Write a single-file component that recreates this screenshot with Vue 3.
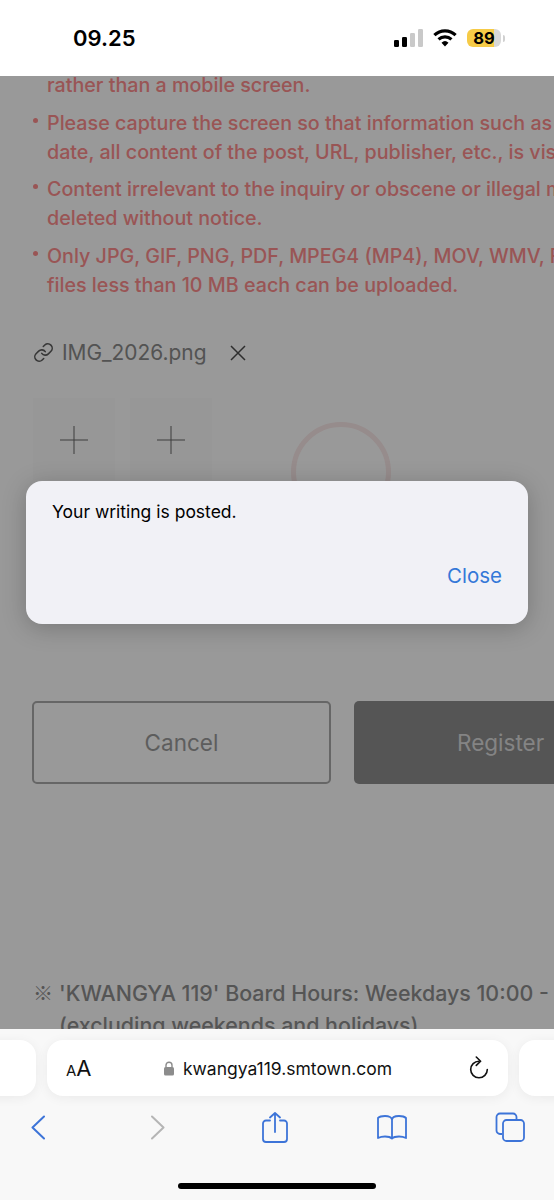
<template>
  <div class="phone">
    <header class="status">
      <span class="time">09.25</span>
      <div class="status-icons">
        <svg width="29" height="18" viewBox="0 0 29 18">
          <rect x="0" y="11" width="5" height="7" rx="1.3" fill="#000" />
          <rect x="8" y="8" width="5" height="10" rx="1.3" fill="#000" />
          <rect x="16" y="4" width="5" height="14" rx="1.3" fill="#c9c9c9" />
          <rect x="24" y="0" width="5" height="18" rx="1.3" fill="#c9c9c9" />
        </svg>
        <svg class="wifi" width="24" height="18" viewBox="0 0 26 19">
          <path d="M1.5 6.5a16.5 16.5 0 0 1 23 0" fill="none" stroke="#000" stroke-width="3.4" />
          <path d="M6 11a10.2 10.2 0 0 1 14 0" fill="none" stroke="#000" stroke-width="3.4" />
          <path d="M9.2 14.6 13 18.6l3.8-4a5.6 5.6 0 0 0-7.6 0z" fill="#000" />
        </svg>
        <div class="battery">
          <span class="level">89</span>
          <span class="cap"></span>
        </div>
      </div>
    </header>

    <main class="page">
      <ul class="notes">
        <li v-for="note in notes" :key="note.first" :class="{ cont: note.cont }">
          <p>{{ note.first }}</p>
          <p v-if="note.second">{{ note.second }}</p>
        </li>
      </ul>

      <div class="file">
        <svg width="21" height="21" viewBox="0 0 24 24" fill="none" stroke="#5c5c5c" stroke-width="1.8" stroke-linecap="round">
          <path d="M10 13a5 5 0 0 0 7.54.54l3-3a5 5 0 0 0-7.07-7.07l-1.72 1.71" />
          <path d="M14 11a5 5 0 0 0-7.54-.54l-3 3a5 5 0 0 0 7.07 7.07l1.71-1.71" />
        </svg>
        <span class="file-name">IMG_2026.png</span>
        <svg class="remove" width="18" height="18" viewBox="0 0 18 18" stroke="#4d4d4d" stroke-width="1.5">
          <path d="M2 2l14 14M16 2 2 16" />
        </svg>
      </div>

      <div class="uploads">
        <div v-for="n in 2" :key="n" class="upload">
          <svg width="28" height="28" viewBox="0 0 28 28" stroke="#666" stroke-width="1">
            <path d="M14 0v28M0 14h28" />
          </svg>
        </div>
      </div>

      <div class="actions">
        <button class="cancel">Cancel</button>
        <button class="register">Register</button>
      </div>

      <div class="hours">
        <p><span class="mark">※</span>'KWANGYA 119' Board Hours: Weekdays 10:00 - 17:00</p>
        <p class="sub">(excluding weekends and holidays)</p>
      </div>

      <div class="spinner"></div>
      <div class="dim"></div>

      <div class="dialog">
        <p>Your writing is posted.</p>
        <span class="close">Close</span>
      </div>
    </main>

    <footer class="bar">
      <div class="tabs">
        <div class="tab side"></div>
        <div class="tab url">
          <span class="aa"><small>A</small>A</span>
          <div class="address">
            <svg width="12" height="15" viewBox="0 0 12 15">
              <path d="M3 6.5V4.2a3 3 0 0 1 6 0v2.3" fill="none" stroke="#8c8c8c" stroke-width="1.4" />
              <rect x="1" y="6" width="10" height="8.5" rx="1.6" fill="#8c8c8c" />
            </svg>
            <span>kwangya119.smtown.com</span>
          </div>
          <svg width="22" height="24" viewBox="0 0 22 24" fill="none" stroke="#111" stroke-width="1.6" stroke-linecap="round" stroke-linejoin="round">
            <path d="M11 5.200A8.300 8.300 0 1 0 19.300 13.500" />
            <path d="M8.300 1 12.600 5.200 8.300 9.400" />
          </svg>
        </div>
        <div class="tab side"></div>
      </div>
      <nav class="tools">
        <span class="tool">
          <svg width="14" height="25" viewBox="0 0 14 25" fill="none" stroke="#3d74d8" stroke-width="2" stroke-linecap="round" stroke-linejoin="round">
            <path d="M13 1.500 1.500 12.500 13 23.500" />
          </svg>
        </span>
        <span class="tool forward">
          <svg width="14" height="25" viewBox="0 0 14 25" fill="none" stroke="#b5b5b5" stroke-width="2" stroke-linecap="round" stroke-linejoin="round">
            <path d="M1 1.500 12.500 12.500 1 23.500" />
          </svg>
        </span>
        <span class="tool share">
          <svg width="26" height="31" viewBox="0 0 26 31" fill="none" stroke="#3d74d8" stroke-width="1.8" stroke-linecap="round" stroke-linejoin="round">
            <path d="M8 8.500H4a3 3 0 0 0-3 3V27a3 3 0 0 0 3 3h18a3 3 0 0 0 3-3V11.500a3 3 0 0 0-3-3h-4" />
            <path d="M13 20V1M8 5.500 13 1l5 4.500" />
          </svg>
        </span>
        <span class="tool">
          <svg width="30" height="25" viewBox="0 0 30 25" fill="none" stroke="#3d74d8" stroke-width="1.8" stroke-linejoin="round">
            <path d="M15 5C15 2.500 12 1 8 1 5 1 2.500 1.500 1 3v20c2-1 4.500-1.500 7-1.500 3 0 5.500.5 7 2 1.500-1.500 4-2 7-2 2.500 0 5 .5 7 1.500V3c-1.500-1.500-4-2-7-2-4 0-7 1.500-7 4zM15 5v18.500" />
          </svg>
        </span>
        <span class="tool">
          <svg width="30" height="30" viewBox="0 0 30 30" fill="none" stroke="#3d74d8" stroke-width="1.8">
            <path d="M7 22H5a3.500 3.500 0 0 1-3.500-3.500V5A3.500 3.500 0 0 1 5 1.500h13A3.500 3.500 0 0 1 21.500 5v2" />
            <rect x="8" y="8" width="21" height="21" rx="3.500" />
          </svg>
        </span>
      </nav>
      <div class="home"></div>
    </footer>
  </div>
</template>

<script setup>
const notes = [
  { first: 'rather than a mobile screen.', cont: true },
  {
    first: 'Please capture the screen so that information such as the',
    second: 'date, all content of the post, URL, publisher, etc., is visible.'
  },
  {
    first: 'Content irrelevant to the inquiry or obscene or illegal material may be',
    second: 'deleted without notice.'
  },
  {
    first: 'Only JPG, GIF, PNG, PDF, MPEG4 (MP4), MOV, WMV, FLV, and',
    second: 'files less than 10 MB each can be uploaded.'
  }
]
</script>

<style>
html,
body {
  background: #fff;
}
</style>

<style scoped>
.phone {
  width: 554px;
  height: 1200px;
  display: flex;
  flex-direction: column;
  overflow: hidden;
  font-family: Inter, sans-serif;
}

.status {
  height: 76px;
  flex: none;
  background: #fff;
  display: flex;
  justify-content: space-between;
  align-items: center;
  padding: 0 49px 0 73px;
  position: relative;
  z-index: 3;
}

.time {
  font-size: 22px;
  font-weight: 600;
  color: #000;
}

.status-icons {
  display: flex;
  align-items: center;
}

.wifi {
  margin-left: 10px;
}

.battery {
  margin-left: 10px;
  display: flex;
  align-items: center;
}

.level {
  width: 34px;
  height: 18px;
  border-radius: 6px;
  background: linear-gradient(90deg, #f6cb47 80%, #d8d8d8 80%);
  font-size: 16.5px;
  font-weight: 700;
  line-height: 18px;
  text-align: center;
  color: #000;
}

.cap {
  width: 2px;
  height: 7px;
  margin-left: 2px;
  border-radius: 0 2px 2px 0;
  background: #d0d0d0;
}

.page {
  flex: 1;
  min-height: 0;
  position: relative;
  overflow: hidden;
  background: #fff;
  white-space: nowrap;
}

.notes {
  list-style: none;
  margin: -5px 0 0;
  padding: 0 0 0 47px;
  display: flex;
  flex-direction: column;
  gap: 8.5px;
  font-size: 19.7px;
  font-weight: 500;
  line-height: 29px;
  color: #ff8e8e;
}

.notes p {
  margin: 0;
}

.notes li {
  position: relative;
}

.notes li:not(.cont)::before {
  content: "";
  position: absolute;
  left: -14px;
  top: 9px;
  width: 5px;
  height: 5px;
  border-radius: 50%;
  background: #ff8e8e;
}

.file {
  margin: 38px 0 0 33px;
  height: 30px;
  display: flex;
  align-items: center;
}

.file-name {
  margin-left: 8px;
  font-size: 20.9px;
  color: #8a8a8a;
}

.remove {
  margin-left: 23px;
}

.uploads {
  margin: 30px 0 0 33px;
  display: flex;
  gap: 15px;
}

.upload {
  width: 82px;
  height: 82px;
  background: #fcfcfc;
  display: flex;
  justify-content: center;
  padding-top: 28px;
  box-sizing: border-box;
}

.spinner {
  position: absolute;
  left: 291px;
  top: 346px;
  width: 100px;
  height: 100px;
  box-sizing: border-box;
  border-radius: 50%;
  border: 5px solid #fbe9e9;
}

.actions {
  margin: 221px 0 0 32px;
  display: flex;
  gap: 23px;
}

.actions button {
  flex: none;
  width: 299px;
  height: 83px;
  border-radius: 5px;
  font-family: inherit;
  font-size: 22.5px;
  box-sizing: border-box;
}

.cancel {
  background: #fff;
  border: 2px solid #aaa;
  color: #9c9c9c;
}

.register {
  background: #8e8e8e;
  border: none;
  color: #dcdcdc;
  text-align: left;
  padding-left: 103px;
}

.hours {
  margin: 193px 0 0 33px;
  font-size: 21.4px;
  font-weight: 500;
  line-height: 32px;
  color: #8e8e8e;
}

.hours p {
  margin: 0;
}

.mark {
  display: inline-block;
  width: 26px;
  font-family: "Noto Sans CJK KR", sans-serif;
  font-size: 20px;
  font-weight: 400;
}

.sub {
  padding-left: 26px;
}

.dim {
  position: absolute;
  inset: 0;
  background: rgba(0, 0, 0, 0.4);
}

.dialog {
  position: absolute;
  left: 26px;
  top: 405px;
  width: 502px;
  height: 143px;
  box-sizing: border-box;
  padding: 18px 26px 0;
  background: #f1f1f6;
  border-radius: 16px;
  box-shadow: 0 4px 24px rgba(0, 0, 0, 0.22);
  display: flex;
  flex-direction: column;
}

.dialog p {
  margin: 0;
  font-size: 17.5px;
  line-height: 26px;
  color: #000;
}

.close {
  margin-top: 38px;
  align-self: flex-end;
  font-size: 20.5px;
  line-height: 26px;
  color: #3478d8;
}

.bar {
  height: 171px;
  flex: none;
  background: #f8f8f8;
  display: flex;
  flex-direction: column;
  position: relative;
  z-index: 3;
}

.tabs {
  margin-top: 11px;
  height: 56px;
  display: flex;
  gap: 11px;
  margin-left: -40px;
}

.tab {
  flex: none;
  background: #fff;
  border-radius: 16px;
  box-shadow: 0 2px 12px rgba(0, 0, 0, 0.06);
}

.side {
  width: 76px;
}

.url {
  width: 461px;
  display: flex;
  align-items: center;
  padding: 0 18px 0 19px;
  box-sizing: border-box;
  color: #111;
}

.aa {
  font-size: 22px;
  width: 26px;
}

.aa small {
  font-size: 15px;
}

.address {
  flex: 1;
  display: flex;
  align-items: center;
  justify-content: center;
  gap: 8px;
  padding-right: 5px;
  font-size: 17.5px;
}

.tools {
  margin-top: 15px;
  height: 32px;
  padding: 0 28px 0 22px;
  display: flex;
  align-items: center;
  justify-content: space-between;
}

.tool {
  width: 32px;
  display: flex;
  justify-content: center;
}

.forward svg {
  margin-left: 4px;
}

.share svg {
  margin-left: 2px;
}

.home {
  position: absolute;
  left: 178px;
  top: 154px;
  width: 198px;
  height: 6px;
  border-radius: 3px;
  background: #000;
}
</style>
